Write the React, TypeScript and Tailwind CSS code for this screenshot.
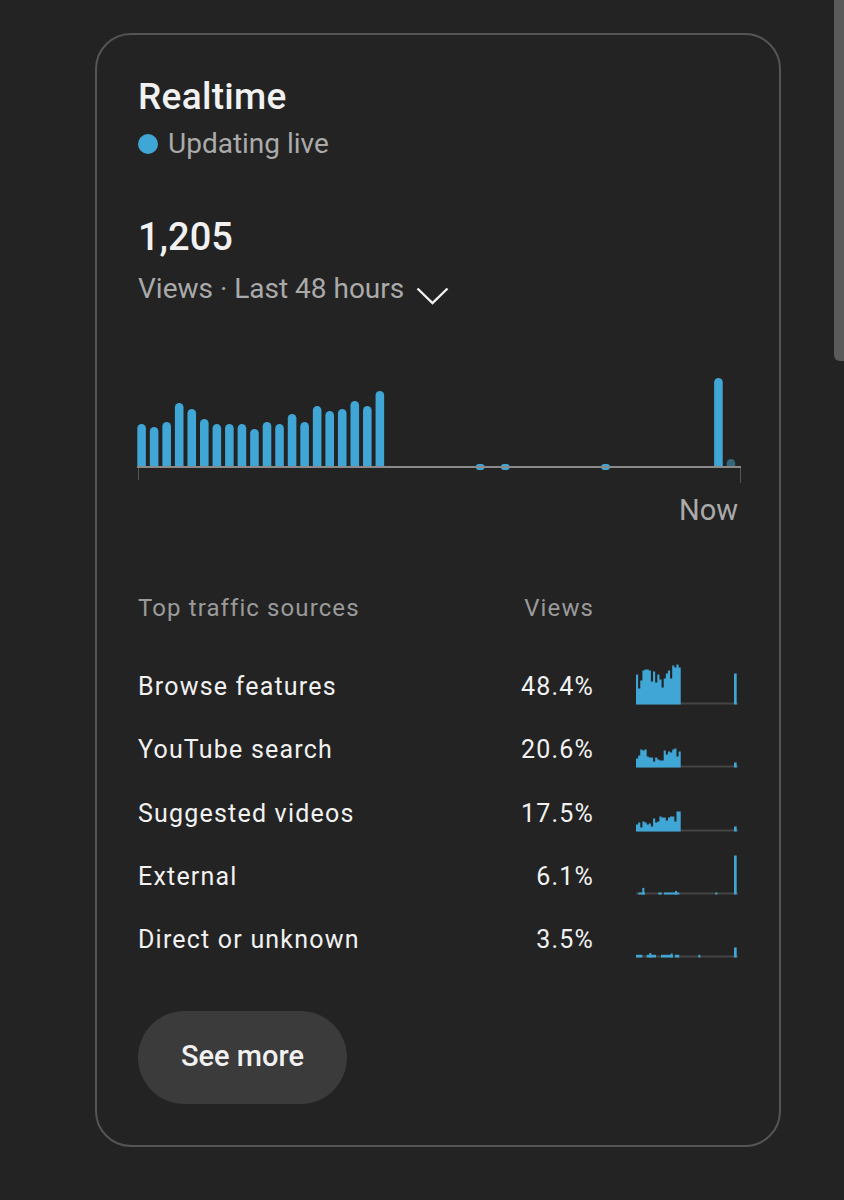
import React from "react";

const BLUE = "#3fa6d5";

// views per hour, oldest first (48 slots, most of them empty)
const hourly: Record<number, number> = {
  0: 43, 1: 40, 2: 45, 3: 64, 4: 58, 5: 48, 6: 43, 7: 43, 8: 43, 9: 38,
  10: 45, 11: 43, 12: 53, 13: 45, 14: 61, 15: 56, 16: 58, 17: 66, 18: 61, 19: 76,
  27: 3, 29: 3, 37: 3, 46: 89,
};

type Bit = [number, number, number];

interface Source {
  name: string;
  pct: string;
  area?: number[];
  bits?: Bit[];
  spike: number;
}

const sources: Source[] = [
  {
    name: "Browse features",
    pct: "48.4%",
    area: [30, 16, 24, 34, 35, 35, 34, 23, 33, 22, 30, 25, 17, 26, 31, 34, 26, 39, 37, 40, 37],
    spike: 31,
  },
  {
    name: "YouTube search",
    pct: "20.6%",
    area: [9, 12, 18, 17, 18, 11, 10, 10, 6, 10, 8, 7, 7, 17, 13, 16, 15, 18, 19, 11, 16],
    spike: 5,
  },
  {
    name: "Suggested videos",
    pct: "17.5%",
    area: [7, 9, 4, 10, 9, 7, 8, 5, 13, 9, 10, 15, 14, 14, 11, 14, 15, 15, 10, 20, 20],
    spike: 5,
  },
  {
    name: "External",
    pct: "6.1%",
    bits: [
      [2.3, 6.7, 2],
      [6.3, 2, 6.6],
      [22.3, 3.4, 2],
      [28, 15.3, 2],
      [39, 2, 3.5],
      [79.3, 2, 2],
    ],
    spike: 39,
  },
  {
    name: "Direct or unknown",
    pct: "3.5%",
    bits: [
      [0, 6.3, 2.7],
      [10.7, 9.3, 2.7],
      [13.3, 2, 4.5],
      [25, 11.7, 2.7],
      [34.7, 2, 4],
      [39, 4.3, 2.7],
      [62.3, 2, 2.7],
    ],
    spike: 10,
  },
];

function barPath(x: number, w: number, h: number, base: number) {
  const r = w / 2;
  const top = base - h;
  return `M${x},${base} V${top + r} A${r},${r} 0 0 1 ${x + w},${top + r} V${base} Z`;
}

function areaPath(values: number[], step: number, base: number) {
  let d = `M0,${base}`;
  values.forEach((h, i) => {
    d += ` L${i * step},${base - h} L${(i + 1) * step},${base - h}`;
  });
  return d + ` L${values.length * step},${base} Z`;
}

function ViewsChart() {
  const base = 107;
  const pitch = 12.54;
  const w = 8.6;
  return (
    <svg width="604" height="124" className="-ml-px block">
      {Array.from({ length: 48 }).map((_, i) => {
        const h = hourly[i];
        if (!h) return null;
        const x = 0.3 + i * pitch;
        if (h < 5) {
          return <rect key={i} x={x} y={base - 3} width={w} height={6} rx={3} fill={BLUE} />;
        }
        return <path key={i} d={barPath(x, w, h, base)} fill={BLUE} />;
      })}
      {/* current hour, still filling */}
      <path d={barPath(0.3 + 47 * pitch, w, 8, base)} fill="#35667c" />
      <rect x="0" y="106" width="604" height="2" fill="#8a8a8a" />
      <rect x="1" y="108" width="1" height="12" fill="#555" />
      <rect x="603" y="108" width="1" height="15" fill="#555" />
    </svg>
  );
}

function Sparkline({ source }: { source: Source }) {
  const base = 49.5;
  return (
    <svg width="102" height="50" className="block">
      <rect x="0" y="47.5" width="102" height="2" fill="#444" />
      {source.area && <path d={areaPath(source.area, 2.13, base)} fill={BLUE} />}
      {source.bits?.map(([x, bw, h], i) => (
        <rect key={i} x={x} y={base - h} width={bw} height={h} fill={BLUE} />
      ))}
      <rect x="98" y={base - source.spike} width="2.7" height={source.spike} fill={BLUE} />
    </svg>
  );
}

export default function App() {
  return (
    <div className="min-h-[1200px] bg-[#232323] pt-[33px] pl-[95px] font-['Roboto','Liberation_Sans',sans-serif]">
      {/* page scrollbar thumb */}
      <div className="fixed right-0 top-0 h-[361px] w-[10px] rounded-bl-[6px] bg-[#5a5a5a]" />

      <div className="w-[686px] rounded-[36px] border-2 border-[#555] pt-[40px] pr-[38px] pb-[41px] pl-[41px]">
        <h2 className="text-[37px] leading-[44px] font-medium tracking-[0.3px] text-[#f1f1f1]">Realtime</h2>
        <div className="mt-[7px] flex items-center gap-[10px]">
          <span className="h-[20px] w-[20px] rounded-full bg-[#3fa6d5]" />
          <span className="text-[28px] leading-[36px] text-[#aaa]">Updating live</span>
        </div>

        <div className="mt-[52px] text-[38px] leading-[46px] font-medium text-[#f1f1f1]">1,205</div>
        <button className="mt-[11px] flex items-start gap-[12px] text-[28px] leading-[36px] text-[#aaa]">
          <span>Views · Last 48 hours</span>
          <svg width="33" height="18" viewBox="0 0 33 18" className="mt-[16px]">
            <path d="M1.5 1.5 L16.5 16 L31.5 1.5" fill="none" stroke="#f1f1f1" strokeWidth="2.4" />
          </svg>
        </button>

        <div className="mt-[53px]">
          <ViewsChart />
        </div>
        <div className="mt-[8px] pr-[3px] text-right text-[29px] leading-[36px] text-[#aaa]">Now</div>

        <div className="mt-[64px] grid grid-cols-[1fr_auto_102px] gap-x-[42px] pr-[3px] text-[24px] leading-[32px] tracking-[1.1px] text-[#9a9a9a]">
          <div>Top traffic sources</div>
          <div className="text-right">Views</div>
          <div />
        </div>

        <div className="mt-[31px] pr-[3px]">
          {sources.map((src) => (
            <div
              key={src.name}
              className="grid h-[63.33px] grid-cols-[1fr_auto_102px] gap-x-[42px] text-[25px] leading-[63.33px] tracking-[1.2px] text-[#f1f1f1]"
            >
              <div>{src.name}</div>
              <div className="text-right">{src.pct}</div>
              <Sparkline source={src} />
            </div>
          ))}
        </div>

        <button className="mt-[39px] h-[93px] w-[209px] rounded-full bg-[#3b3b3b] text-[29px] font-medium text-[#f1f1f1]">
          See more
        </button>
      </div>
    </div>
  );
}
